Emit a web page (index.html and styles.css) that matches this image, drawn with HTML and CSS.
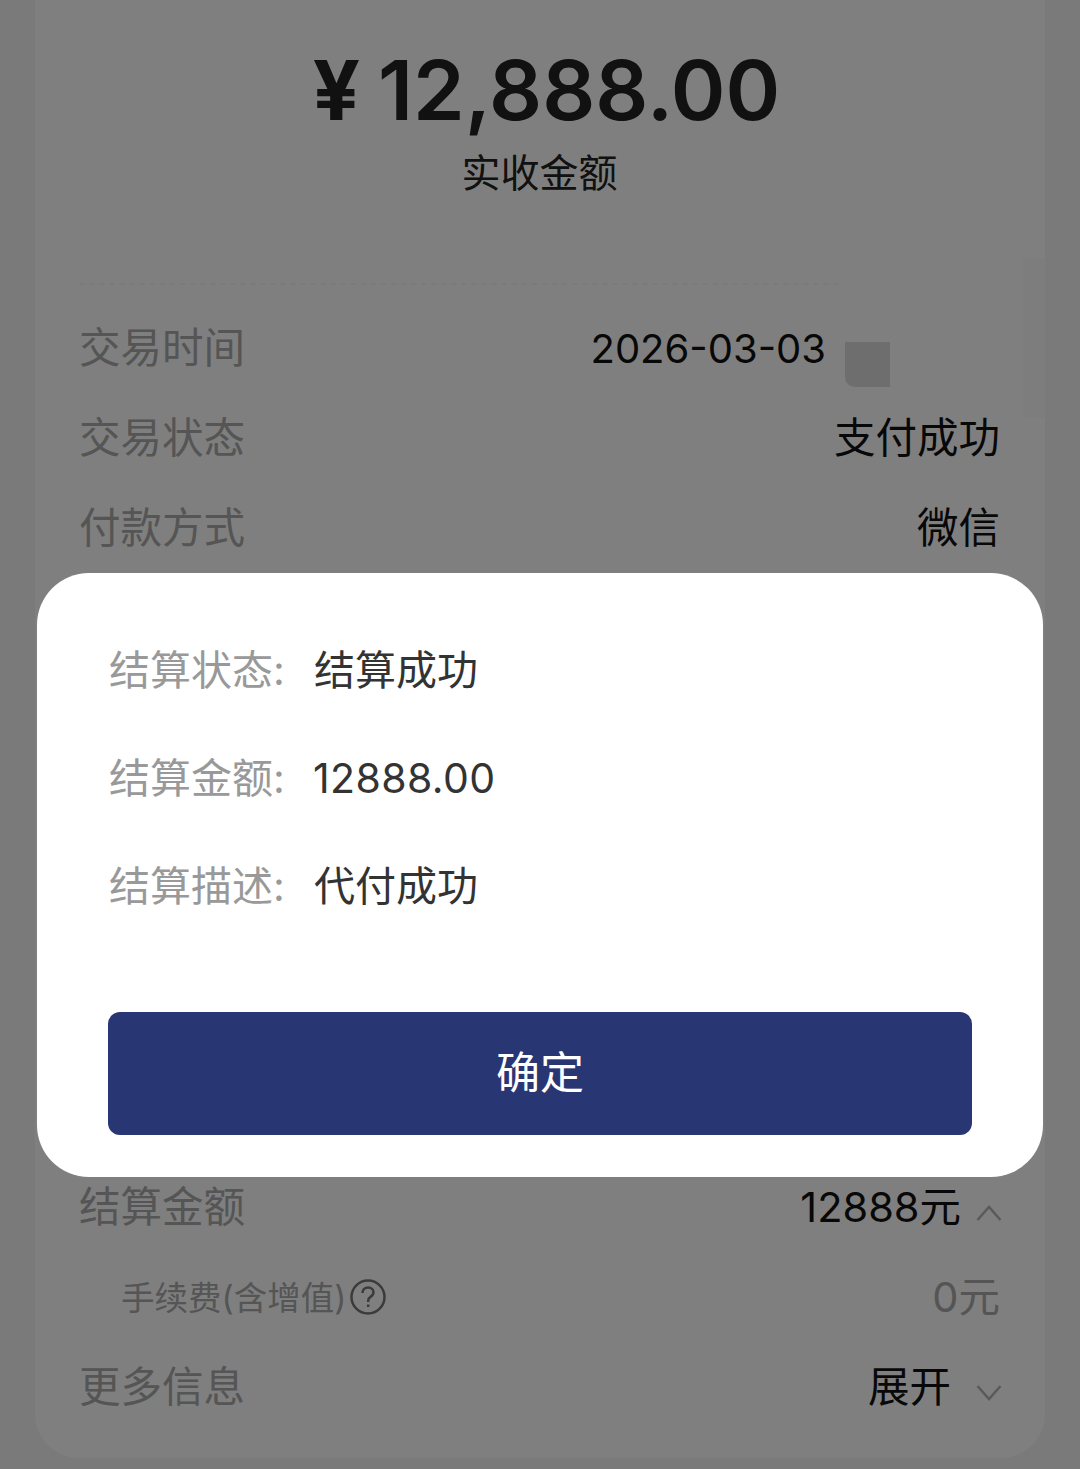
FILE: index.html
```html
<!DOCTYPE html>
<html lang="zh-CN">
<head>
    <meta charset="UTF-8">
    <meta name="viewport" content="width=device-width, initial-scale=1.0">
    <title>交易详情</title>
    <link rel="stylesheet" href="styles.css">
</head>
<body>
    <div class="card">
        <div class="amount"><span class="currency">¥</span>12,888.00</div>
        <div class="amount-label">实收金额</div>
        <div class="dashed"></div>

        <div class="row">
            <span class="row-label">交易时间</span>
            <span class="row-value date-value">2026-03-03<i class="mask"></i></span>
        </div>
        <div class="row">
            <span class="row-label">交易状态</span>
            <span class="row-value">支付成功</span>
        </div>
        <div class="row">
            <span class="row-label">付款方式</span>
            <span class="row-value">微信</span>
        </div>

        <div class="rows-hidden"></div>

        <div class="row">
            <span class="row-label">结算金额</span>
            <span class="row-value with-arrow">12888元
                <svg class="arrow" viewBox="0 0 26 16"><path d="M1.5 15 13 2l11.5 13"/></svg>
            </span>
        </div>
        <div class="row sub-row">
            <span class="row-label">手续费(含增值)<svg class="help" viewBox="0 0 36 36"><circle cx="18" cy="18" r="16.5"/><path d="M12.5 14c0-3.4 2.4-5.5 5.6-5.500s5.400 2 5.400 4.800c0 2.200-1.200 3.400-3 4.600-1.500 1-2.300 1.900-2.300 3.900v1.200"/><path d="M18.200 25.500v2.500"/></svg></span>
            <span class="row-value">0元</span>
        </div>
        <div class="row">
            <span class="row-label">更多信息</span>
            <span class="row-value with-arrow expand">展开
                <svg class="arrow" viewBox="0 0 26 16"><path d="M1.500 1 13 14 24.500 1"/></svg>
            </span>
        </div>
    </div>
    <div class="side-strip"></div>

    <div class="overlay">
        <div class="popup">
            <div class="info-list">
                <div class="info-row">
                    <span class="info-label">结算状态:</span>
                    <span class="info-value">结算成功</span>
                </div>
                <div class="info-row">
                    <span class="info-label">结算金额:</span>
                    <span class="info-value digits">12888.00</span>
                </div>
                <div class="info-row">
                    <span class="info-label">结算描述:</span>
                    <span class="info-value">代付成功</span>
                </div>
            </div>
            <button class="confirm-btn">确定</button>
        </div>
    </div>
</body>
</html>
```

FILE: styles.css
```css
* {
    margin: 0;
    padding: 0;
    box-sizing: border-box;
    font-family: Inter, 'Noto Sans CJK SC', sans-serif;
}

html, body {
    height: 1469px;
    overflow: hidden;
}

body {
    background-color: #f4f4f4;
    position: relative;
}

.card {
    width: 1010px;
    height: 1458px;
    margin-left: 35px;
    padding: 0 45px 0 44px;
    background-color: #ffffff;
    border-radius: 0 0 44px 44px;
}

.amount {
    padding: 38px 0 0 14px;
    height: 142px;
    font-size: 83px;
    line-height: 104px;
    font-weight: 600;
    color: #222;
    text-align: center;
    white-space: nowrap;
}

.currency {
    margin-right: 18px;
    font-weight: 700;
}

.amount-label {
    margin-top: 8px;
    font-size: 39px;
    line-height: 46px;
    color: #222;
    text-align: center;
}

.dashed {
    width: 760px;
    margin-top: 87px;
    border-top: 2px dashed #f6f6f6;
}

.row {
    display: flex;
    justify-content: space-between;
    align-items: center;
    height: 90px;
    font-size: 41.5px;
}

.dashed + .row {
    margin-top: 18px;
}

.row-label {
    padding-bottom: 7px;
    color: #aaa;
}

.row-value {
    padding-bottom: 7px;
    color: #111;
}

.date-value {
    padding-bottom: 0;
    margin-right: 174px;
    font-size: 40px;
    position: relative;
}

/* leftover blot from the source capture */
.mask {
    position: absolute;
    left: calc(100% + 19px);
    top: 18px;
    width: 45px;
    height: 45px;
    background-color: #dcdcdc;
    border-bottom-left-radius: 10px;
}

.rows-hidden {
    height: 589px;
}

.with-arrow {
    display: flex;
    align-items: center;
    margin-right: -2px;
}

.arrow {
    width: 26px;
    height: 16px;
    margin-left: 15px;
    margin-top: 19px;
    fill: none;
    stroke: #b4b4b4;
    stroke-width: 2.5;
}

.expand .arrow {
    margin-left: 25px;
}

.sub-row {
    font-size: 33.5px;
    padding-left: 42px;
}

.sub-row .row-label {
    display: flex;
    align-items: center;
    padding-bottom: 4px;
    color: #aaa;
}

.sub-row .row-value {
    font-size: 41.5px;
    color: #aaa;
}

.help {
    width: 36px;
    height: 36px;
    margin: 3px 0 0 4px;
    fill: none;
    stroke: #777;
    stroke-width: 2.5;
}

.side-strip {
    position: absolute;
    left: 1023px;
    top: 258px;
    width: 22px;
    height: 160px;
    background-color: #fafafa;
}

.overlay {
    position: absolute;
    top: 0;
    left: 0;
    width: 100%;
    height: 100%;
    background-color: rgba(0, 0, 0, 0.5);
    display: flex;
    justify-content: center;
    align-items: flex-start;
    padding-top: 573px;
}

.popup {
    width: 1006px;
    height: 604px;
    padding: 42px 71px 0;
    background-color: #ffffff;
    border-radius: 52px;
}

.info-list {
    padding-left: 1px;
    height: 397px;
}

.info-row {
    display: flex;
    align-items: center;
    height: 108px;
    font-size: 41px;
}

.info-label {
    width: 205px;
    padding-bottom: 5px;
    color: #999;
}

.info-value {
    padding-bottom: 5px;
    color: #333;
}

.digits {
    padding-bottom: 0;
    margin: 2px 0 0 -1px;
    letter-spacing: 0.4px;
}

.confirm-btn {
    display: block;
    width: 100%;
    height: 123px;
    padding-bottom: 8px;
    background-color: #283673;
    color: white;
    border: none;
    border-radius: 12px;
    font-size: 44px;
}
```
